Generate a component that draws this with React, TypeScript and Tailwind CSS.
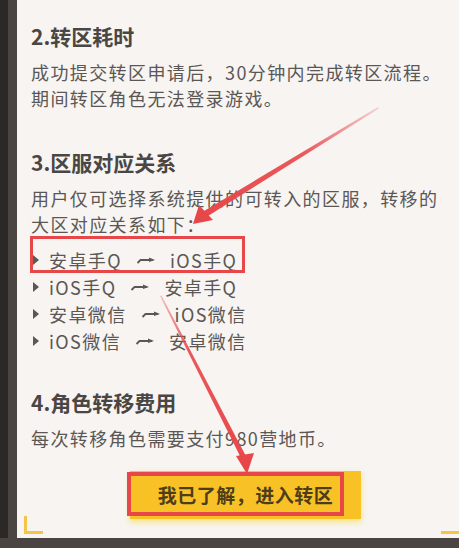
import React from "react";

const font = { fontFamily: '"Noto Sans CJK SC", "Noto Sans", sans-serif' };

function FlowArrow() {
  return (
    <svg width="20" height="12" viewBox="0 0 20 12" className="mx-[14px] inline-block">
      <path d="M1.5 9 L4.5 6 L17 6" stroke="#5b5755" strokeWidth="1.8" fill="none" strokeLinejoin="round" />
      <path d="M13 3.5 L19 6 L13 8" fill="#5b5755" />
    </svg>
  );
}

function Row({ from, to }: { from: string; to: string }) {
  return (
    <li className="flex h-[27px] items-center">
      <span className="mr-[10px] ml-[2px] inline-block h-0 w-0 border-y-[5px] border-l-[6px] border-y-transparent border-l-[#5b5755]" />
      <span>{from}</span>
      <FlowArrow />
      <span>{to}</span>
    </li>
  );
}

function Heading({ children, className = "" }: { children: React.ReactNode; className?: string }) {
  return <h2 className={`text-[21px] font-bold leading-[26px] tracking-normal text-[#4a4644] ${className}`}>{children}</h2>;
}

export default function App() {
  return (
    <div className="relative flex h-[548px] w-[459px] flex-col overflow-hidden bg-[#2b2826]" style={font}>
      <div className="flex h-[538px]">
        <div className="w-[8px] bg-[#2b2826]" />
        <div className="w-[9px] bg-[#4b4541]" />
        <div className="relative flex-1 bg-[#f7f4f2] pl-[14px] pt-[23px] text-[18px] leading-[26px] tracking-[1.4px] text-[#5b5755]">
          <Heading>2.转区耗时</Heading>
          <p className="mt-[10px]">成功提交转区申请后，30分钟内完成转区流程。</p>
          <p>期间转区角色无法登录游戏。</p>

          <Heading className="mt-[38px]">3.区服对应关系</Heading>
          <p className="mt-[10px]">用户仅可选择系统提供的可转入的区服，转移的</p>
          <p>大区对应关系如下：</p>

          <ul className="mt-[9px]">
            <Row from="安卓手Q" to="iOS手Q" />
            <Row from="iOS手Q" to="安卓手Q" />
            <Row from="安卓微信" to="iOS微信" />
            <Row from="iOS微信" to="安卓微信" />
          </ul>

          <Heading className="mt-[35px]">4.角色转移费用</Heading>
          <p className="mt-[10px]">每次转移角色需要支付980营地币。</p>

          <div className="ml-[99px] mt-[20px] flex h-[48px] w-[231px] items-center justify-center bg-[#f8c126] shadow-[0_3px_6px_rgba(250,215,40,0.6)]">
            <span className="text-[19px] font-bold tracking-[0.5px] text-[#4d3d1a]">我已了解，进入转区</span>
          </div>

          {/* corner brackets of the panel frame */}
          <div className="absolute bottom-[4px] left-[7px] h-[18px] w-[19px] border-b-[3px] border-l-[3px] border-[#f3c64a]" />
          <div className="absolute bottom-[4px] right-0 h-[3px] w-[18px] bg-[#f3c64a]" />
        </div>
      </div>
      <div className="h-[10px] bg-[#4a4542]" />

      {/* red highlight boxes */}
      <div className="absolute left-[30px] top-[236px] h-[37px] w-[215px] border-[3px] border-[#e8474a]" />
      <div className="absolute left-[127px] top-[472px] h-[44px] w-[217px] border-[4px] border-[#e8474a]" />

      <svg className="absolute left-0 top-0" width="459" height="548" viewBox="0 0 459 548">
        <defs>
          <linearGradient id="fadeA" x1="378" y1="107" x2="195" y2="222" gradientUnits="userSpaceOnUse">
            <stop offset="0" stopColor="#e8474a" stopOpacity="0.2" />
            <stop offset="0.4" stopColor="#e8474a" stopOpacity="0.9" />
            <stop offset="1" stopColor="#e8474a" />
          </linearGradient>
          <linearGradient id="fadeB" x1="160" y1="296" x2="246" y2="472" gradientUnits="userSpaceOnUse">
            <stop offset="0" stopColor="#e8474a" stopOpacity="0.3" />
            <stop offset="0.3" stopColor="#e8474a" stopOpacity="0.9" />
            <stop offset="1" stopColor="#e8474a" />
          </linearGradient>
        </defs>
        <polygon points="378,107 379,108.5 208,216 204,211" fill="url(#fadeA)" />
        <polygon points="193,224 199,205 213,220" fill="#e8474a" />
        <polygon points="160,296 161.5,295.5 248,460 243,462" fill="url(#fadeB)" />
        <polygon points="247,474 236,456 254,453" fill="#e8474a" />
      </svg>
    </div>
  );
}
